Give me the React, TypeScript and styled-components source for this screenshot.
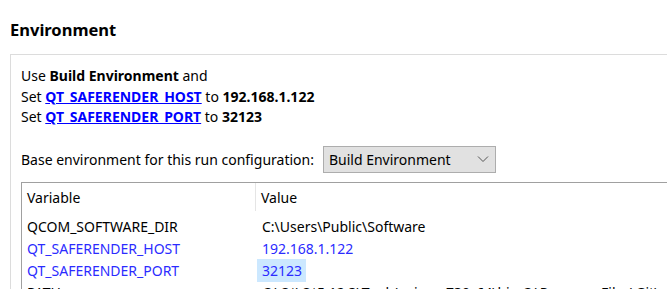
import React from "react";
import styled, { createGlobalStyle } from "styled-components";

const Global = createGlobalStyle`
  html, body { margin: 0; padding: 0; background: #ffffff; overflow: hidden; }
  body { font-family: "Noto Sans", "Open Sans", sans-serif; font-size: 14px; color: #000; }
`;

const Page = styled.div`
  width: 667px;
  height: 289px;
  overflow: hidden;
  padding: 19px 0 0 10px;
  box-sizing: border-box;
`;

const Title = styled.div`
  font-weight: 700;
  font-size: 16.5px;
  line-height: 22px;
  height: 22px;
`;

const Group = styled.div`
  margin-top: 13px;
  width: 720px;
  border-top: 1px solid #dcdcdc;
  border-left: 1px solid #dcdcdc;
  padding: 11px 0 0 10px;
`;

const Summary = styled.div`
  line-height: 20.5px;
`;

const Link = styled.a`
  color: #0000ff;
  font-weight: 700;
  text-decoration: underline;
`;

const Strong = styled.b`
  font-weight: 700;
`;

const BaseRow = styled.div`
  margin-top: 18px;
  display: flex;
  align-items: center;
  gap: 9px;
  height: 27px;
`;

const Combo = styled.div`
  width: 173px;
  height: 27px;
  box-sizing: border-box;
  background: #e1e1e1;
  border: 1px solid #adadad;
  display: flex;
  align-items: center;
  justify-content: space-between;
  padding: 0 6px 0 5px;
`;

const Chevron = styled.svg`
  width: 12px;
  height: 8px;
`;

const Table = styled.div`
  margin-top: 9px;
  border-top: 1px solid #a0a0a0;
  border-left: 1px solid #a0a0a0;
`;

const Header = styled.div`
  display: grid;
  grid-template-columns: 234px 1fr;
  height: 28px;
  align-items: center;
  margin-bottom: 4px;
`;

const HeadCell = styled.div<{ $sep?: boolean }>`
  height: 100%;
  display: flex;
  align-items: center;
  padding-left: 5px;
  padding-top: 2px;
  box-sizing: border-box;
  border-right: ${(p) => (p.$sep ? "1px solid #e5e5e5" : "none")};
`;

const Row = styled.div<{ $changed?: boolean }>`
  display: grid;
  grid-template-columns: 235px 1fr;
  height: 22px;
  align-items: center;
  color: ${(p) => (p.$changed ? "#2b2bff" : "#000")};
  white-space: nowrap;
`;

const Cell = styled.div`
  padding-left: 5px;
  display: flex;
  align-items: center;
`;

const ValueCell = styled.div`
  display: flex;
  align-items: center;
`;

const ValueText = styled.span<{ $selected?: boolean }>`
  display: inline-flex;
  align-items: center;
  height: 23px;
  padding: 0 4px 0 5px;
  background: ${(p) => (p.$selected ? "#cce8ff" : "transparent")};
`;

const rows = [
  { name: "QCOM_SOFTWARE_DIR", value: "C:\\Users\\Public\\Software", changed: false, selected: false },
  { name: "QT_SAFERENDER_HOST", value: "192.168.1.122", changed: true, selected: false },
  { name: "QT_SAFERENDER_PORT", value: "32123", changed: true, selected: true },
  { name: "PATH", value: "C:\\Qt\\Qt5.12.3\\Tools\\mingw730_64\\bin;C:\\Program Files\\Git\\cmd;C:\\Windows", changed: false, selected: false },
];

export default function App() {
  return (
    <>
      <Global />
      <Page>
        <Title>Environment</Title>
        <Group>
          <Summary>
            <div>
              Use <Strong>Build Environment</Strong> and
            </div>
            <div>
              Set <Link>QT_SAFERENDER_HOST</Link> to <Strong>192.168.1.122</Strong>
            </div>
            <div>
              Set <Link>QT_SAFERENDER_PORT</Link> to <Strong>32123</Strong>
            </div>
          </Summary>
          <BaseRow>
            <span>Base environment for this run configuration:</span>
            <Combo>
              <span>Build Environment</span>
              <Chevron viewBox="0 0 12 8">
                <path d="M1 1.5 L6 6.5 L11 1.5" fill="none" stroke="#555" strokeWidth="1" />
              </Chevron>
            </Combo>
          </BaseRow>
          <Table>
            <Header>
              <HeadCell $sep>Variable</HeadCell>
              <HeadCell>Value</HeadCell>
            </Header>
            {rows.map((r) => (
              <Row key={r.name} $changed={r.changed}>
                <Cell>{r.name}</Cell>
                <ValueCell>
                  <ValueText $selected={r.selected}>{r.value}</ValueText>
                </ValueCell>
              </Row>
            ))}
          </Table>
        </Group>
      </Page>
    </>
  );
}
